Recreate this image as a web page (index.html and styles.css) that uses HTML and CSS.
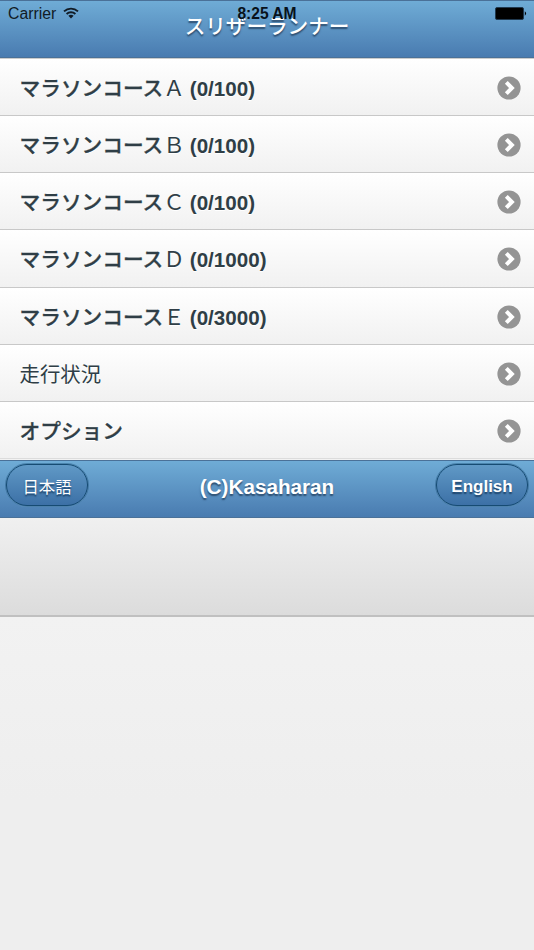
FILE: index.html
```html
<!DOCTYPE html>
<html lang="ja">
<head>
<meta charset="utf-8">
<title>スリザーランナー</title>
<link rel="stylesheet" href="styles.css">
</head>
<body>
<svg class="defs" width="0" height="0">
  <symbol id="chevron" viewBox="0 0 24 24">
    <circle cx="12" cy="12" r="11.6" fill="#949494"/>
    <path d="M9.3 6.4 14.9 12 9.3 17.6" fill="none" stroke="#fff" stroke-width="4"/>
  </symbol>
</svg>
<div class="statusbar">
  <span class="carrier">Carrier</span>
  <svg class="wifi" viewBox="0 0 16 12"><path d="M1 4.4a10.2 10.2 0 0 1 14 0M3.6 7a6.5 6.5 0 0 1 8.8 0" fill="none" stroke="#111b25" stroke-width="1.9"/><path d="M5.4 8.8a3.9 3.9 0 0 1 5.2 0L8 11.6z" fill="#111b25"/></svg>
  <span class="clock">8:25 AM</span>
  <svg class="battery" viewBox="0 0 32 13"><rect x=".5" y=".5" width="28" height="12" rx="1.5" fill="#000" stroke="#20394f"/><path d="M29.8 4.3q2.6 2.2 0 4.4z" fill="#000"/></svg>
</div>
<header class="bar header"><h1>スリザーランナー</h1></header>
<ul class="list">
  <li><span class="label"><b>マラソンコース</b><i>Ａ</i><strong>(0/100)</strong></span><svg class="arrow"><use href="#chevron"/></svg></li>
  <li><span class="label"><b>マラソンコース</b><i>Ｂ</i><strong>(0/100)</strong></span><svg class="arrow"><use href="#chevron"/></svg></li>
  <li><span class="label"><b>マラソンコース</b><i>Ｃ</i><strong>(0/100)</strong></span><svg class="arrow"><use href="#chevron"/></svg></li>
  <li><span class="label"><b>マラソンコース</b><i>Ｄ</i><strong>(0/1000)</strong></span><svg class="arrow"><use href="#chevron"/></svg></li>
  <li><span class="label"><b>マラソンコース</b><i>Ｅ</i><strong>(0/3000)</strong></span><svg class="arrow"><use href="#chevron"/></svg></li>
  <li><span class="label raised"><span class="kanji">走行状況</span></span><svg class="arrow"><use href="#chevron"/></svg></li>
  <li><span class="label raised"><b>オプション</b></span><svg class="arrow"><use href="#chevron"/></svg></li>
</ul>
<footer class="bar footer">
  <button class="btn ja">日本語</button>
  <h2>(C)Kasaharan</h2>
  <button class="btn en">English</button>
</footer>
<section class="panel"></section>
</body>
</html>
```

FILE: styles.css
```css
* { box-sizing: border-box; }
body {
  margin: 0;
  height: 950px;
  overflow: hidden;
  background: linear-gradient(#f2f2f2 616px, #eee 800px);
  color: #2f3e46;
  font-family: "Liberation Sans", "Noto Sans CJK JP", sans-serif;
}
.defs { position: absolute; }
.statusbar {
  position: absolute;
  z-index: 2;
  inset: 0 0 auto;
  height: 27px;
  display: flex;
  align-items: center;
  padding: 0 8px;
  font-size: 15.8px;
  color: #111b25;
}
.carrier { width: 48px; }
.wifi { width: 16px; height: 12px; margin: -2px 0 0 7px; }
.clock {
  position: absolute;
  left: 0;
  right: 0;
  text-align: center;
  font-weight: bold;
  font-size: 15.6px;
  color: #08111a;
}
.battery { width: 32px; height: 13px; margin-left: auto; margin-right: -1px; }
.bar {
  background: linear-gradient(#6facd6, #497bb0);
  border: solid #4a7198;
  border-width: 1px 0;
  color: #fff;
  text-shadow: 0 1.5px 1.5px #2d4e70;
}
.header { height: 57.5px; display: flex; align-items: center; justify-content: center; }
h1, h2 { margin: 0; line-height: 1; white-space: nowrap; }
h1 {
  font: 500 20.6px/24px "Noto Sans CJK JP", sans-serif;
  margin-top: -7px;
}
.list {
  margin: 0;
  padding: 0;
  list-style: none;
  height: 402px;
  display: grid;
  grid-template-rows: repeat(7, 1fr);
  border-top: 1px solid #ccc;
}
.list li {
  display: flex;
  align-items: center;
  justify-content: space-between;
  padding: 2px 13px 0 19.5px;
  border-bottom: 1px solid #c8c8c8;
  background: linear-gradient(#fff, #f1f1f1);
}
.list li:last-child { border-bottom-color: #dcdcdc; }
.label {
  display: flex;
  align-items: baseline;
  font-size: 20.7px;
  line-height: 24px;
  white-space: nowrap;
  text-shadow: 0 1px 0 #fff;
}
.raised { margin-top: -3px; }
.label b, .label i, .kanji { font-family: "Noto Sans CJK JP", sans-serif; }
.label b { font-weight: 500; -webkit-text-stroke: .3px currentColor; }
.label i { font-style: normal; font-weight: 400; font-size: 21.5px; width: 20.5px; }
.label .kanji { font-size: 20.4px; }
.label strong { margin-left: 6px; font-size: 20.6px; }
.arrow { width: 24px; height: 24px; }
.footer {
  height: 58px;
  display: grid;
  grid-template-columns: 1fr auto 1fr;
  align-items: center;
  padding: 0 6px;
}
h2 { font-size: 20.7px; margin-top: -3px; }
.btn {
  height: 42px;
  margin: -7px 0 0;
  padding: 3px 0 0;
  border: 1px solid #164b73;
  outline: .5px solid #164b7366;
  border-radius: 21px;
  background: linear-gradient(#6099c6, #3c70a6);
  box-shadow: 0 1px 0 #72a6d1;
  color: #fff;
  font: bold 17px/20px "Liberation Sans", sans-serif;
  text-shadow: 0 1.5px 1.5px #1c4369;
}
.ja { width: 82px; font: 400 16.4px/20px "Noto Sans CJK JP", sans-serif; padding-top: 1px; }
.en { width: 92px; justify-self: end; padding-top: 4px; }
.panel {
  height: 99px;
  border-bottom: 2px solid #c0c0c0;
  background: linear-gradient(#f0f0f0, #dcdcdc);
}
```
